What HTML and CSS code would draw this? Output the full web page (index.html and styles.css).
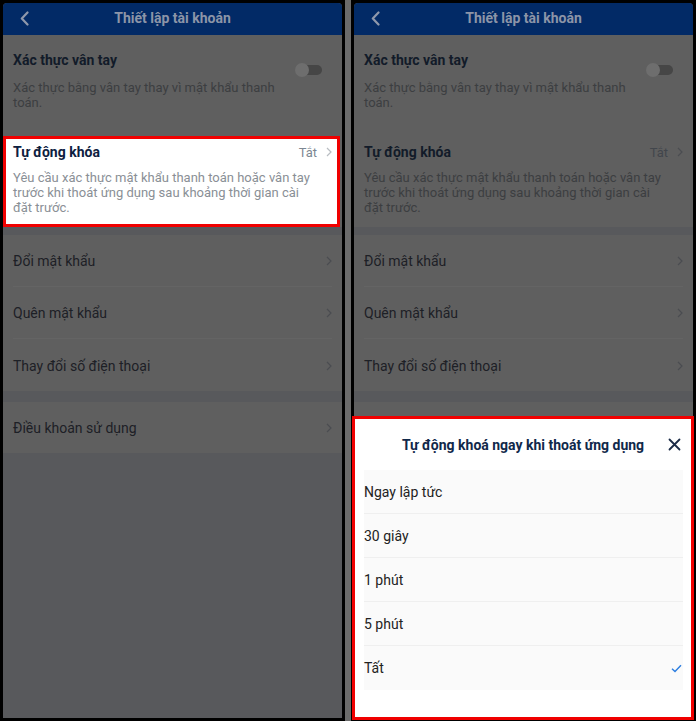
FILE: index.html
```html
<!DOCTYPE html>
<html lang="vi">
<head>
<meta charset="utf-8">
<title>Thiết lập tài khoản</title>
<link rel="stylesheet" href="styles.css">
</head>
<body>
<div class="stage">
  <div class="phone">
    <div class="screen">
      <header class="appbar">
        <svg class="back" width="9" height="15" viewBox="0 0 9 15"><path d="M7.5 1.5 L1.8 7.5 L7.5 13.5" fill="none" stroke="currentColor" stroke-width="2.2" stroke-linecap="round" stroke-linejoin="round"/></svg>
        <h1 class="appbar-title">Thiết lập tài khoản</h1>
      </header>
      <section class="card">
        <div class="setting fp">
          <div class="setting-text">
            <div class="setting-title">Xác thực vân tay</div>
            <p class="setting-desc fp-desc">Xác thực bằng vân tay thay vì mật khẩu thanh toán.</p>
          </div>
          <span class="toggle"><span class="knob"></span></span>
        </div>
        <div class="setting lock highlight">
          <div class="setting-head">
            <div class="setting-title">Tự động khóa</div>
            <span class="setting-value">Tắt</span>
            <svg class="chev" width="6" height="10" viewBox="0 0 6 10"><path d="M1 1 L5 5 L1 9" fill="none" stroke="currentColor" stroke-width="1.2"/></svg>
          </div>
          <p class="setting-desc lock-desc">Yêu cầu xác thực mật khẩu thanh toán hoặc vân tay trước khi thoát ứng dụng sau khoảng thời gian cài đặt trước.</p>
        </div>
      </section>
      <ul class="menu first">
        <li class="menu-item"><span>Đổi mật khẩu</span><svg class="chev" width="6" height="10" viewBox="0 0 6 10"><path d="M1 1 L5 5 L1 9" fill="none" stroke="currentColor" stroke-width="1.2"/></svg></li>
        <li class="menu-item"><span>Quên mật khẩu</span><svg class="chev" width="6" height="10" viewBox="0 0 6 10"><path d="M1 1 L5 5 L1 9" fill="none" stroke="currentColor" stroke-width="1.2"/></svg></li>
        <li class="menu-item"><span>Thay đổi số điện thoại</span><svg class="chev" width="6" height="10" viewBox="0 0 6 10"><path d="M1 1 L5 5 L1 9" fill="none" stroke="currentColor" stroke-width="1.2"/></svg></li>
      </ul>
      <ul class="menu second">
        <li class="menu-item"><span>Điều khoản sử dụng</span><svg class="chev" width="6" height="10" viewBox="0 0 6 10"><path d="M1 1 L5 5 L1 9" fill="none" stroke="currentColor" stroke-width="1.2"/></svg></li>
      </ul>
    </div>
  </div>

  <div class="phone">
    <div class="screen">
      <header class="appbar">
        <svg class="back" width="9" height="15" viewBox="0 0 9 15"><path d="M7.5 1.5 L1.8 7.5 L7.5 13.5" fill="none" stroke="currentColor" stroke-width="2.2" stroke-linecap="round" stroke-linejoin="round"/></svg>
        <h1 class="appbar-title">Thiết lập tài khoản</h1>
      </header>
      <section class="card">
        <div class="setting fp">
          <div class="setting-text">
            <div class="setting-title">Xác thực vân tay</div>
            <p class="setting-desc fp-desc">Xác thực bằng vân tay thay vì mật khẩu thanh toán.</p>
          </div>
          <span class="toggle"><span class="knob"></span></span>
        </div>
        <div class="setting lock">
          <div class="setting-head">
            <div class="setting-title">Tự động khóa</div>
            <span class="setting-value">Tắt</span>
            <svg class="chev" width="6" height="10" viewBox="0 0 6 10"><path d="M1 1 L5 5 L1 9" fill="none" stroke="currentColor" stroke-width="1.2"/></svg>
          </div>
          <p class="setting-desc lock-desc">Yêu cầu xác thực mật khẩu thanh toán hoặc vân tay trước khi thoát ứng dụng sau khoảng thời gian cài đặt trước.</p>
        </div>
      </section>
      <ul class="menu first">
        <li class="menu-item"><span>Đổi mật khẩu</span><svg class="chev" width="6" height="10" viewBox="0 0 6 10"><path d="M1 1 L5 5 L1 9" fill="none" stroke="currentColor" stroke-width="1.2"/></svg></li>
        <li class="menu-item"><span>Quên mật khẩu</span><svg class="chev" width="6" height="10" viewBox="0 0 6 10"><path d="M1 1 L5 5 L1 9" fill="none" stroke="currentColor" stroke-width="1.2"/></svg></li>
        <li class="menu-item"><span>Thay đổi số điện thoại</span><svg class="chev" width="6" height="10" viewBox="0 0 6 10"><path d="M1 1 L5 5 L1 9" fill="none" stroke="currentColor" stroke-width="1.2"/></svg></li>
      </ul>
      <ul class="menu second">
        <li class="menu-item"><span>Điều khoản sử dụng</span><svg class="chev" width="6" height="10" viewBox="0 0 6 10"><path d="M1 1 L5 5 L1 9" fill="none" stroke="currentColor" stroke-width="1.2"/></svg></li>
      </ul>
    </div>

    <div class="sheet">
      <div class="sheet-inner">
        <div class="sheet-head">
          <span></span>
          <h2 class="sheet-title">Tự động khoá ngay khi thoát ứng dụng</h2>
          <svg class="close" width="13" height="13" viewBox="0 0 13 13"><path d="M1.5 1.5 L11.5 11.5 M11.5 1.5 L1.5 11.5" fill="none" stroke="currentColor" stroke-width="1.8" stroke-linecap="round"/></svg>
        </div>
        <ul class="options">
          <li class="option">Ngay lập tức</li>
          <li class="option">30 giây</li>
          <li class="option">1 phút</li>
          <li class="option">5 phút</li>
          <li class="option selected">Tất<svg class="check" width="11" height="9" viewBox="0 0 11 9"><path d="M1 4.8 L4 7.6 L10 1.2" fill="none" stroke="currentColor" stroke-width="1.4"/></svg></li>
        </ul>
      </div>
    </div>
  </div>
</div>
</body>
</html>
```

FILE: styles.css
```css
* { box-sizing: border-box; }
html, body { margin: 0; padding: 0; }
body {
  background: #6b6b6b;
  font-family: Roboto, "Noto Sans", "Liberation Sans", sans-serif;
  width: 696px;
  height: 721px;
  overflow: hidden;
}
.stage {
  display: flex;
  gap: 6px;
  height: 721px;
}
.phone {
  position: relative;
  width: 345px;
  height: 721px;
  background: #000;
  padding: 3px;
}
.screen {
  height: 100%;
  background: #58595c;
  border-radius: 4px 4px 0 0;
  overflow: hidden;
}
.appbar {
  height: 32px;
  padding-bottom: 2px;
  background: #022a66;
  color: #8f98ab;
  display: flex;
  align-items: center;
  justify-content: center;
  position: relative;
}
.back {
  position: absolute;
  left: 17px;
  top: 8px;
}
.appbar-title {
  margin: 0;
  font-size: 14px;
  font-weight: 700;
  color: #8c95a8;
}
.card {
  background: #5f5f5f;
}
.setting {
  padding: 15px 10px 26px;
}
.fp {
  display: flex;
  justify-content: space-between;
  align-items: flex-start;
  height: 101px;
}
.setting-title {
  font-size: 14px;
  line-height: 20px;
  font-weight: 700;
  color: #121b29;
}
.setting-desc {
  margin: 0;
  font-size: 13px;
  line-height: 15px;
  color: #3c3e41;
}
.fp-desc {
  margin-top: 10px;
  max-width: 268px;
}
.toggle {
  margin-top: 13px;
  margin-right: 10px;
  width: 27px;
  height: 14px;
  position: relative;
  display: block;
}
.toggle::before {
  content: "";
  position: absolute;
  left: 6px;
  right: 0;
  top: 2px;
  height: 10px;
  border-radius: 5px;
  background: #464646;
}
.knob {
  position: absolute;
  left: 0;
  top: 0;
  width: 14px;
  height: 14px;
  border-radius: 50%;
  background: #6e6e6e;
}
.lock {
  height: 91px;
  border: 3px solid transparent;
  padding: 3px 5px 9px 7px;
  margin-right: 2px;
}
.setting-head {
  display: flex;
  align-items: center;
}
.setting-head .setting-title { flex: 1; }
.setting-value {
  font-size: 13px;
  color: #42464c;
  margin-right: 9px;
}
.chev { color: #4b4d51; display: block; }
.lock-desc {
  margin-top: 8px;
  max-width: 302px;
}
.highlight {
  background: #fff;
  border-color: #f00000;
}
.highlight .setting-title { color: #0d203f; }
.highlight .setting-value { color: #7d8792; }
.highlight .chev { color: #b9bdc2; }
.highlight .setting-desc { color: #8a8f96; }

.menu {
  list-style: none;
  margin: 0;
  padding: 0;
  background: #5f5f5f;
}
.menu.first { margin-top: 8px; }
.menu.second { margin-top: 11px; }
.menu-item {
  height: 52px;
  margin: 0 10px;
  display: flex;
  align-items: center;
  justify-content: space-between;
  font-size: 14px;
  color: #1d2026;
  border-bottom: 1px solid #646464;
  padding-top: 1px;
}
.menu-item:last-child { border-bottom: none; }
.second .menu-item { height: 51px; }

.sheet {
  position: absolute;
  left: 1px;
  right: 2px;
  top: 416px;
  bottom: 1px;
  border: 3px solid #f00000;
  background: #fff;
}
.sheet-inner {
  height: 100%;
  background: #fff;
  border-radius: 6px 6px 0 0;
}
.sheet-head {
  height: 51px;
  display: grid;
  grid-template-columns: 1fr auto 1fr;
  align-items: center;
}
.sheet-title {
  margin: 0;
  font-size: 14px;
  font-weight: 700;
  color: #10284a;
}
.close {
  justify-self: end;
  margin-right: 10px;
  color: #1b2b47;
}
.options {
  list-style: none;
  margin: 0 8px 0 9px;
  padding: 0;
  background: #fafafa;
}
.option {
  height: 44px;
  display: flex;
  align-items: center;
  justify-content: space-between;
  font-size: 14px;
  color: #222;
  border-bottom: 1px solid #efefef;
  padding-right: 1px;
}
.option:last-child { border-bottom: none; }
.check { color: #2b7de0; }
```
